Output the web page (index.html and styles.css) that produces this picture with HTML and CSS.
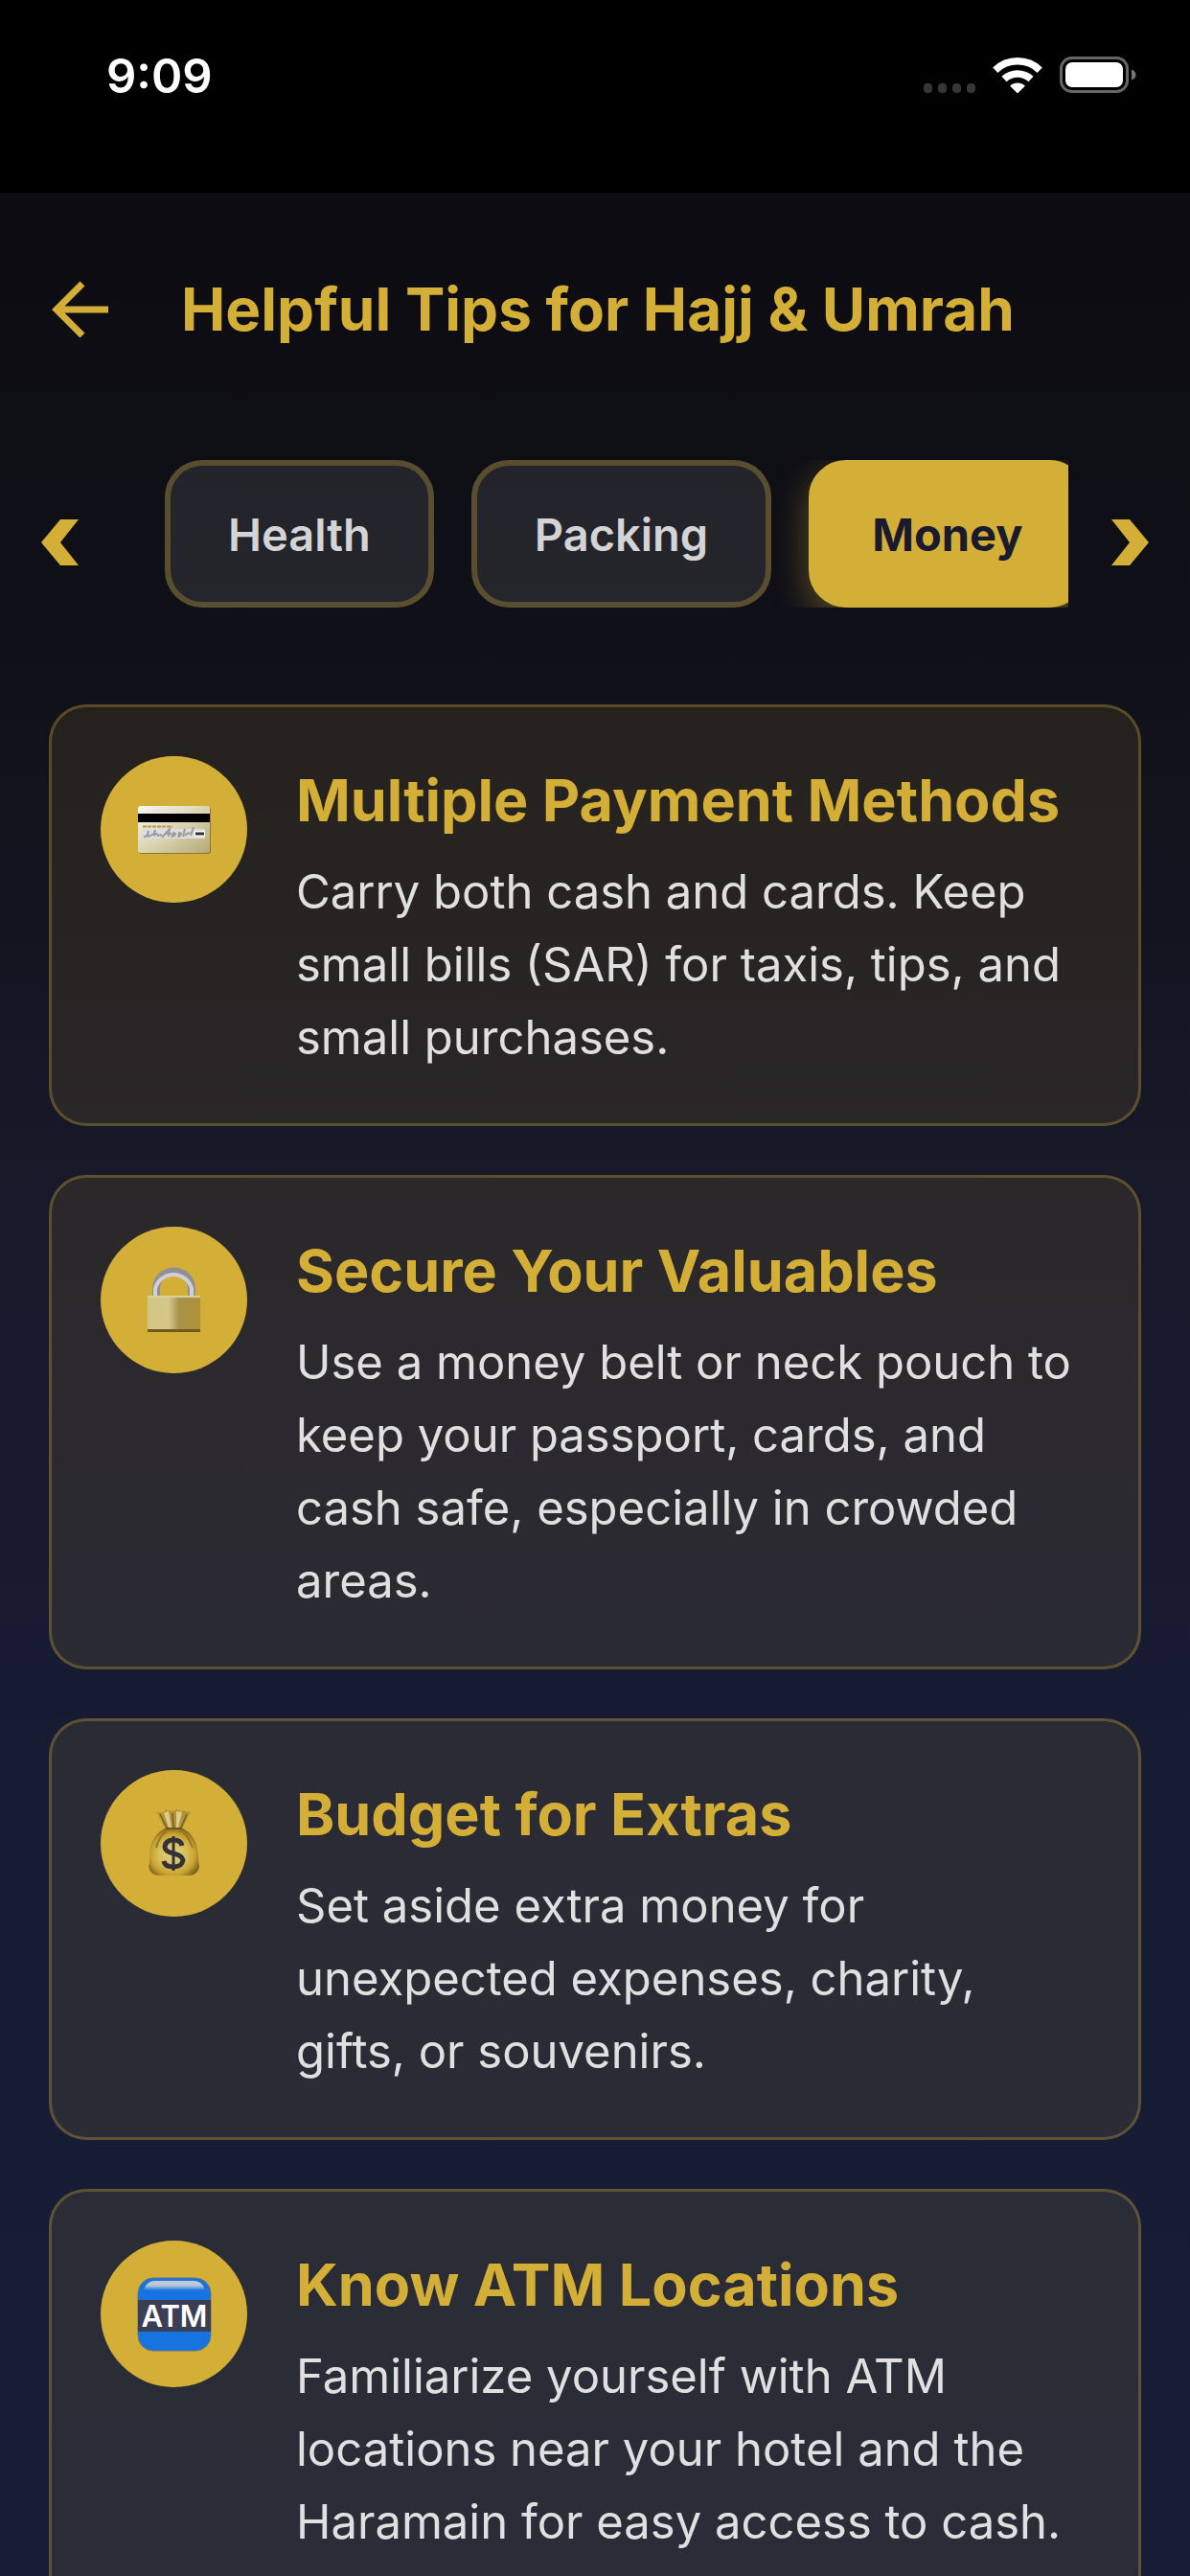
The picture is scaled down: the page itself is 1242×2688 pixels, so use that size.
FILE: index.html
```
<!DOCTYPE html>
<html lang="en">
<head>
  <meta charset="UTF-8">
  <meta name="viewport" content="width=device-width, initial-scale=1.0">
  <title>Helpful Tips for Hajj &amp; Umrah</title>
  <link rel="stylesheet" href="styles.css">
</head>
<body>
  <div class="status-bar">
    <time class="clock">9:09</time>
    <div class="status-icons">
      <svg class="cellular" width="54" height="38" viewBox="0 0 54 38" fill="#36363a">
        <rect x="0" y="28" width="9" height="10" rx="4"/>
        <rect x="15" y="28" width="9" height="10" rx="4"/>
        <rect x="30" y="28" width="9" height="10" rx="4"/>
        <rect x="45" y="28" width="9" height="10" rx="4"/>
      </svg>
      <svg class="wifi" width="52" height="38" viewBox="0 0 52 38" fill="none" stroke="#fff" stroke-width="7.5">
        <path d="M2.8 14.2A33.5 33.5 0 0 1 49.2 14.2"/>
        <path d="M12 23.5A20.5 20.5 0 0 1 40 23.5"/>
        <path d="M26 38.5L18.2 30.7A11 11 0 0 1 33.8 30.7Z" fill="#fff" stroke="none"/>
      </svg>
      <svg class="battery" width="80" height="38" viewBox="0 0 80 38">
        <rect x="1.5" y="1.5" width="69" height="35" rx="11" fill="none" stroke="#66656a" stroke-width="3"/>
        <rect x="6" y="6" width="60" height="26" rx="7" fill="#fff"/>
        <path d="M75 13.5q4.5 2 4.5 5.5t-4.5 5.5z" fill="#77767b"/>
      </svg>
    </div>
  </div>

  <header class="header">
    <button class="back" aria-label="Back">
      <svg width="60" height="60" viewBox="0 0 60 60" fill="none" stroke="#d4af37" stroke-width="7">
        <path d="M59 30H6M32 3L5 30L32 57"/>
      </svg>
    </button>
    <h1>Helpful Tips for Hajj &amp; Umrah</h1>
  </header>

  <nav class="categories">
    <button class="arrow" aria-label="Previous">
      <svg width="40" height="48" viewBox="0 0 40 48" fill="#d4af37">
        <path d="M20 0H39L20 24L39 48H20L0 24Z"/>
      </svg>
    </button>
    <div class="tabs">
      <button class="tab">Health</button>
      <button class="tab">Packing</button>
      <button class="tab active">Money</button>
    </div>
    <button class="arrow" aria-label="Next">
      <svg width="40" height="48" viewBox="0 0 40 48" fill="#d4af37">
        <path d="M20 0H1L20 24L1 48H20L40 24Z"/>
      </svg>
    </button>
  </nav>

  <main class="tips">
    <article class="tip">
      <div class="tip-icon">
        <svg width="78" height="78" viewBox="0 0 78 78">
          <defs>
            <linearGradient id="card" x1="0" y1="0" x2="1" y2="1">
              <stop offset="0" stop-color="#f6f6f4"/>
              <stop offset=".5" stop-color="#dcd5b4"/>
              <stop offset="1" stop-color="#b5a876"/>
            </linearGradient>
          </defs>
          <rect x="2" y="15" width="75" height="49" rx="3" fill="#94762a"/>
          <rect x="1" y="14" width="75" height="49" rx="3" fill="url(#card)"/>
          <rect x="1" y="22" width="75" height="9" fill="#000"/>
          <path d="M6 35.5H37" stroke="#b49a4a" stroke-width="2" stroke-dasharray="4 1"/>
          <rect x="5" y="38" width="66" height="10" fill="#dddddc"/>
          <path d="M7 46q4 1 5-6q-2 8 2 5t3 0l2-6l-1 6q3-4 4 0l4-1M26 47l8-9l-1 8m-4-3h7m0 4l2-5q4 0 0 4m5 1l1-5q4 0 0 4m4 0l2-8m0 7q4-4 5-2m1 2l3-9" fill="none" stroke="#9c9ca2" stroke-width="2"/>
          <rect x="60" y="40" width="11" height="6" rx="1" fill="#fff"/>
          <path d="M61 43H70" stroke="#333" stroke-width="3"/>
        </svg>
      </div>
      <div class="tip-body">
        <h2>Multiple Payment Methods</h2>
        <p>Carry both cash and cards. Keep small bills (SAR) for taxis, tips, and small purchases.</p>
      </div>
    </article>

    <article class="tip">
      <div class="tip-icon">
        <svg width="78" height="78" viewBox="0 0 78 78">
          <defs>
            <linearGradient id="lock" x1="0" y1="0" x2="1" y2="0">
              <stop offset="0" stop-color="#d3c683"/>
              <stop offset=".4" stop-color="#d6c68a"/>
              <stop offset=".6" stop-color="#a8924a"/>
              <stop offset="1" stop-color="#ae9238"/>
            </linearGradient>
          </defs>
          <path d="M20 36V27a18.5 18.5 0 0 1 37 0V36" fill="none" stroke="#8f8f96" stroke-width="8"/>
          <path d="M19 36V27a19.5 19.5 0 0 1 38 0V36" fill="none" stroke="#d0d0d6" stroke-width="4"/>
          <rect x="11" y="34" width="55" height="38" rx="1" fill="url(#lock)"/>
          <rect x="11" y="34" width="55" height="2" fill="#d9cf9c"/>
          <rect x="11" y="69" width="55" height="3" fill="#6e5a1c"/>
        </svg>
      </div>
      <div class="tip-body">
        <h2>Secure Your Valuables</h2>
        <p>Use a money belt or neck pouch to keep your passport, cards, and cash safe, especially in crowded areas.</p>
      </div>
    </article>

    <article class="tip">
      <div class="tip-icon">
        <svg width="78" height="78" viewBox="0 0 78 78">
          <defs>
            <radialGradient id="bag" cx=".48" cy=".55" r=".58">
              <stop offset="0" stop-color="#e0d08a"/>
              <stop offset=".5" stop-color="#d8bd55"/>
              <stop offset=".75" stop-color="#c9a22f"/>
              <stop offset="1" stop-color="#7a611c"/>
            </radialGradient>
          </defs>
          <path d="M30 24L20 5Q28 9 30 3Q37 6 42 3Q47 6 49 4Q52 7 56 5L47 24Z" fill="#b3933a"/>
          <path d="M33 22L28 7L33 5L36 22ZM41 22L41 5L47 6L43 22Z" fill="#dccb8d"/>
          <path d="M38 22L37 7M46 22L52 8M31 22L24 8" stroke="#78601c" stroke-width="1.5"/>
          <path d="M29 23H48Q60 29 63 44Q64 56 65 63Q63 72 54 72H24Q14 72 12 63Q14 55 13 45Q17 29 29 23Z" fill="url(#bag)"/>
          <path d="M30 23H47" stroke="#6d5619" stroke-width="2"/>
          <path d="M31 26Q23 31 20 43M47 26Q54 32 58 43" fill="none" stroke="#92762a" stroke-width="2"/>
          <path d="M38 31V67" stroke="#333238" stroke-width="3"/>
          <path d="M47 41Q46 35 38 35T29 42Q29 47 38 49T48 56Q47 63 38 63T28 57" fill="none" stroke="#333238" stroke-width="5"/>
        </svg>
      </div>
      <div class="tip-body">
        <h2>Budget for Extras</h2>
        <p>Set aside extra money for unexpected expenses, charity, gifts, or souvenirs.</p>
      </div>
    </article>

    <article class="tip">
      <div class="tip-icon">
        <svg width="78" height="78" viewBox="0 0 78 78">
          <defs>
            <linearGradient id="shine" x1="0" y1="0" x2="0" y2="1">
              <stop offset="0" stop-color="#c6cbd3"/>
              <stop offset=".5" stop-color="#b6c5d8"/>
              <stop offset="1" stop-color="#1673df"/>
            </linearGradient>
          </defs>
          <rect x="1" y="1" width="76" height="76" rx="16" fill="#1673df" stroke="#6e7480" stroke-width="1"/>
          <path d="M7 14Q10 4 18 4H60Q68 4 71 14Z" fill="url(#shine)"/>
          <rect x="1" y="24" width="76" height="33" fill="#3a3f54"/>
          <text class="atm" x="39" y="52" text-anchor="middle">ATM</text>
        </svg>
      </div>
      <div class="tip-body">
        <h2>Know ATM Locations</h2>
        <p>Familiarize yourself with ATM locations near your hotel and the Haramain for easy access to cash.</p>
      </div>
    </article>
  </main>
</body>
</html>
```
FILE: styles.css
```
:root {
  --gold: #d4af37;
  --gold-line: rgba(212, 175, 55, .3);
  --text: #e0e0e0;
}

* {
  padding: 0;
  margin: 0;
  box-sizing: border-box;
}

body {
  display: flex;
  flex-direction: column;
  height: 100vh;
  overflow: hidden;
  background: linear-gradient(#0a0a0e, #101018 25%, #191a2c 50%, #171c34 70%, #171d37);
  font-family: Inter, "Liberation Sans", sans-serif;
  color: var(--text);
}

button {
  border: none;
  background: none;
  font: inherit;
  color: inherit;
  cursor: pointer;
}

svg {
  display: block;
}

.status-bar {
  display: flex;
  flex: none;
  justify-content: space-between;
  align-items: flex-start;
  height: 201px;
  padding: 48px 56px 0 111px;
  background-color: #000;
  color: #fff;
}

.clock {
  font-size: 49px;
  font-weight: 600;
  line-height: 64px;
}

.status-icons {
  display: flex;
  align-items: center;
  gap: 18px;
  padding-top: 11px;
}

.header {
  display: flex;
  flex: none;
  align-items: center;
  gap: 75px;
  height: 243px;
  padding: 0 54px;
}

.header h1 {
  font-size: 62px;
  font-weight: 700;
  color: var(--gold);
}

.categories {
  display: flex;
  flex: none;
  align-items: center;
  gap: 44px;
  padding: 36px 43px 60px;
}

.arrow {
  flex: none;
  padding-top: 18px;
}

.tabs {
  display: flex;
  flex: 1;
  gap: 39px;
  padding-left: 45px;
  overflow: hidden;
}

.tab {
  flex: none;
  height: 154px;
  padding: 0 60px;
  border: 6px solid var(--gold-line);
  border-radius: 39px;
  background-color: rgba(255, 255, 255, .09);
  font-size: 47px;
  font-weight: 600;
  color: #d4d4d6;
}

.tab.active {
  border-color: var(--gold);
  background-color: var(--gold);
  box-shadow: 0 12px 36px rgba(212, 175, 55, .4);
  color: #1a1a2e;
  font-weight: 700;
}

.tips {
  display: flex;
  flex: 1;
  flex-direction: column;
  gap: 51px;
  min-height: 0;
  padding: 41px 51px;
  overflow: hidden;
}

.tip {
  display: flex;
  flex: none;
  gap: 51px;
  padding: 51px;
  border: 3px solid var(--gold-line);
  border-radius: 39px;
  background-color: rgba(212, 175, 55, .1);
}

.tip-icon {
  display: flex;
  flex: none;
  justify-content: center;
  align-items: center;
  width: 153px;
  height: 153px;
  border-radius: 50%;
  background-color: var(--gold);
}

.tip-body {
  flex: 1;
}

.tip h2 {
  margin-bottom: 12px;
  font-size: 61px;
  font-weight: 700;
  line-height: 92px;
  color: var(--gold);
}

.tip p {
  font-size: 49px;
  line-height: 76px;
}

.atm {
  font-size: 31px;
  font-weight: 600;
  fill: #fff;
}
```
